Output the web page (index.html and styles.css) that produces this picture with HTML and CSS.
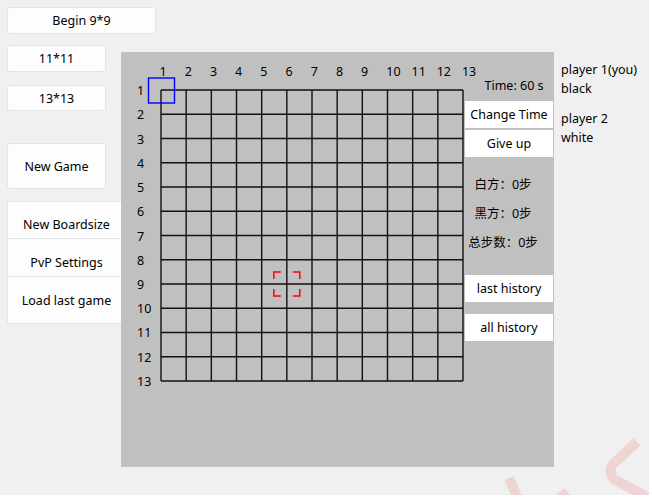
FILE: index.html
```html
<!DOCTYPE html>
<html>
<head>
<meta charset="utf-8">
<link rel="stylesheet" href="styles.css">
</head>
<body>
<div class="app">
  <div class="left">
    <div class="btn btn-begin">Begin 9*9</div>
    <div class="btn btn-size b11">11*11</div>
    <div class="btn btn-size b13">13*13</div>
    <div class="btn btn-new">New Game</div>
    <div class="menu">
      <div class="btn btn-menu m1">New Boardsize</div>
      <div class="btn btn-menu m2">PvP Settings</div>
      <div class="btn btn-menu m3">Load last game</div>
    </div>
  </div>
  <div class="panel">
    <svg class="board" width="344" height="340" viewBox="0 0 344 340">
      <g class="grid">
        <line x1="40" y1="38" x2="40" y2="329"/>
        <line x1="65.17" y1="38" x2="65.17" y2="329"/>
        <line x1="90.33" y1="38" x2="90.33" y2="329"/>
        <line x1="115.5" y1="38" x2="115.5" y2="329"/>
        <line x1="140.67" y1="38" x2="140.67" y2="329"/>
        <line x1="165.83" y1="38" x2="165.83" y2="329"/>
        <line x1="191" y1="38" x2="191" y2="329"/>
        <line x1="216.17" y1="38" x2="216.17" y2="329"/>
        <line x1="241.33" y1="38" x2="241.33" y2="329"/>
        <line x1="266.5" y1="38" x2="266.5" y2="329"/>
        <line x1="291.67" y1="38" x2="291.67" y2="329"/>
        <line x1="316.83" y1="38" x2="316.83" y2="329"/>
        <line x1="342" y1="38" x2="342" y2="329"/>
        <line x1="40" y1="38" x2="342" y2="38"/>
        <line x1="40" y1="62.25" x2="342" y2="62.25"/>
        <line x1="40" y1="86.5" x2="342" y2="86.5"/>
        <line x1="40" y1="110.75" x2="342" y2="110.75"/>
        <line x1="40" y1="135" x2="342" y2="135"/>
        <line x1="40" y1="159.25" x2="342" y2="159.25"/>
        <line x1="40" y1="183.5" x2="342" y2="183.5"/>
        <line x1="40" y1="207.75" x2="342" y2="207.75"/>
        <line x1="40" y1="232" x2="342" y2="232"/>
        <line x1="40" y1="256.25" x2="342" y2="256.25"/>
        <line x1="40" y1="280.5" x2="342" y2="280.5"/>
        <line x1="40" y1="304.75" x2="342" y2="304.75"/>
        <line x1="40" y1="329" x2="342" y2="329"/>
      </g>
      <g class="labels">
        <text x="38.5" y="23.5">1</text>
        <text x="63.7" y="23.5">2</text>
        <text x="88.9" y="23.5">3</text>
        <text x="114.1" y="23.5">4</text>
        <text x="139.3" y="23.5">5</text>
        <text x="164.5" y="23.5">6</text>
        <text x="189.7" y="23.5">7</text>
        <text x="214.9" y="23.5">8</text>
        <text x="240.1" y="23.5">9</text>
        <text x="265.3" y="23.5">10</text>
        <text x="290.5" y="23.5">11</text>
        <text x="315.7" y="23.5">12</text>
        <text x="340.9" y="23.5">13</text>
        <text x="16" y="43.2">1</text>
        <text x="16" y="67.4">2</text>
        <text x="16" y="91.6">3</text>
        <text x="16" y="115.9">4</text>
        <text x="16" y="140.1">5</text>
        <text x="16" y="164.3">6</text>
        <text x="16" y="188.5">7</text>
        <text x="16" y="212.7">8</text>
        <text x="16" y="237">9</text>
        <text x="16" y="261.2">10</text>
        <text x="16" y="285.4">11</text>
        <text x="16" y="309.6">12</text>
        <text x="16" y="333.8">13</text>
      </g>
      <rect class="cursor" x="27.5" y="26" width="26" height="25"/>
      <path class="marker" d="M152.8,227 V220 H159.8 M171.8,220 H178.8 V227 M152.8,237 V244 H159.8 M171.8,244 H178.8 V237"/>
    </svg>
    <div class="side">
      <div class="time">Time: 60 s</div>
      <div class="pbtn change">Change Time</div>
      <div class="pbtn giveup">Give up</div>
      <div class="stat s1">白方：0步</div>
      <div class="stat s2">黑方：0步</div>
      <div class="stat s3">总步数：0步</div>
      <div class="pbtn last">last history</div>
      <div class="pbtn all">all history</div>
    </div>
  </div>
  <div class="players">
    <div class="pl">player 1(you)</div>
    <div class="pl">black</div>
    <div class="pl p2">player 2</div>
    <div class="pl">white</div>
  </div>
  <svg class="watermark" width="160" height="70" viewBox="0 0 160 70">
    <path d="M10,42 L22,70"/>
    <path d="M62,55 L72,70"/>
    <path d="M138,6 L114,28 Q108,36 116,44 L150,62"/>
  </svg>
</div>
</body>
</html>
```
FILE: styles.css
```css
html, body {
  margin: 0;
  padding: 0;
  background: #ffffff;
}
body {
  font-family: "Noto Sans", "Noto Sans CJK SC", sans-serif;
  font-size: 12.5px;
  color: #000;
}
.app {
  position: relative;
  width: 649px;
  height: 495px;
  background: #f0f0f0;
  display: flex;
  align-items: flex-start;
  overflow: hidden;
}
.left {
  box-sizing: border-box;
  width: 121px;
  flex-shrink: 0;
  padding: 7px 0 0 7px;
  display: flex;
  flex-direction: column;
}
.btn {
  box-sizing: border-box;
  background: #fdfdfd;
  border: 1px solid #e4e4e4;
  border-radius: 3px;
  display: flex;
  align-items: center;
  justify-content: center;
  flex-shrink: 0;
}
.btn-begin {
  width: 149px;
  height: 27px;
}
.btn-size {
  width: 99px;
  height: 27px;
}
.b11 { margin-top: 11px; }
.b13 { margin-top: 13px; height: 26px; }
.btn-new {
  width: 99px;
  height: 46px;
  margin-top: 32px;
}
.menu {
  margin-top: 12px;
  display: flex;
  flex-direction: column;
}
.btn-menu {
  width: 119px;
  height: 38px;
  border-radius: 0;
  border-top: none;
}
.m1 {
  border-top: 1px solid #e4e4e4;
  padding-top: 8px;
}
.m2 { padding-top: 10px; }
.m3 { height: 47px; padding-top: 1px; }
.panel {
  flex-shrink: 0;
  margin-top: 52px;
  width: 433px;
  height: 415px;
  background: #c0c0c0;
  display: flex;
  align-items: flex-start;
}
.board {
  display: block;
  flex-shrink: 0;
  overflow: visible;
}
.grid line {
  stroke: #111;
  stroke-width: 1.4;
}
.labels text {
  font-family: "Noto Sans", sans-serif;
  font-size: 12.5px;
  fill: #000;
}
.cursor {
  fill: none;
  stroke: #0000ff;
  stroke-width: 1.4;
}
.marker {
  fill: none;
  stroke: #ff0000;
  stroke-width: 1.5;
}
.side {
  width: 88px;
  display: flex;
  flex-direction: column;
  flex-shrink: 0;
}
.time {
  margin-top: 25px;
  height: 17px;
  line-height: 17px;
  padding-left: 10px;
  text-align: center;
}
.pbtn {
  height: 27px;
  background: #ffffff;
  display: flex;
  align-items: center;
  justify-content: center;
}
.change { margin-top: 7px; }
.giveup { margin-top: 2px; }
.stat {
  height: 17px;
  line-height: 17px;
  text-align: center;
  padding-right: 12px;
  font-family: "Noto Sans", "Noto Sans CJK SC", sans-serif;
}
.s1 { margin-top: 18.5px; }
.s2, .s3 { margin-top: 12px; }
.last { margin-top: 24.5px; }
.all { margin-top: 12px; }
.players {
  margin-left: 7px;
  margin-top: 60px;
  display: flex;
  flex-direction: column;
  white-space: nowrap;
}
.pl {
  height: 19px;
  line-height: 19px;
}
.p2 { margin-top: 11px; }
.watermark {
  position: absolute;
  left: 499px;
  top: 436px;
  pointer-events: none;
}
.watermark path {
  fill: none;
  stroke: rgba(235, 70, 70, 0.16);
  stroke-width: 10;
  stroke-linecap: butt;
  stroke-linejoin: round;
}
```
